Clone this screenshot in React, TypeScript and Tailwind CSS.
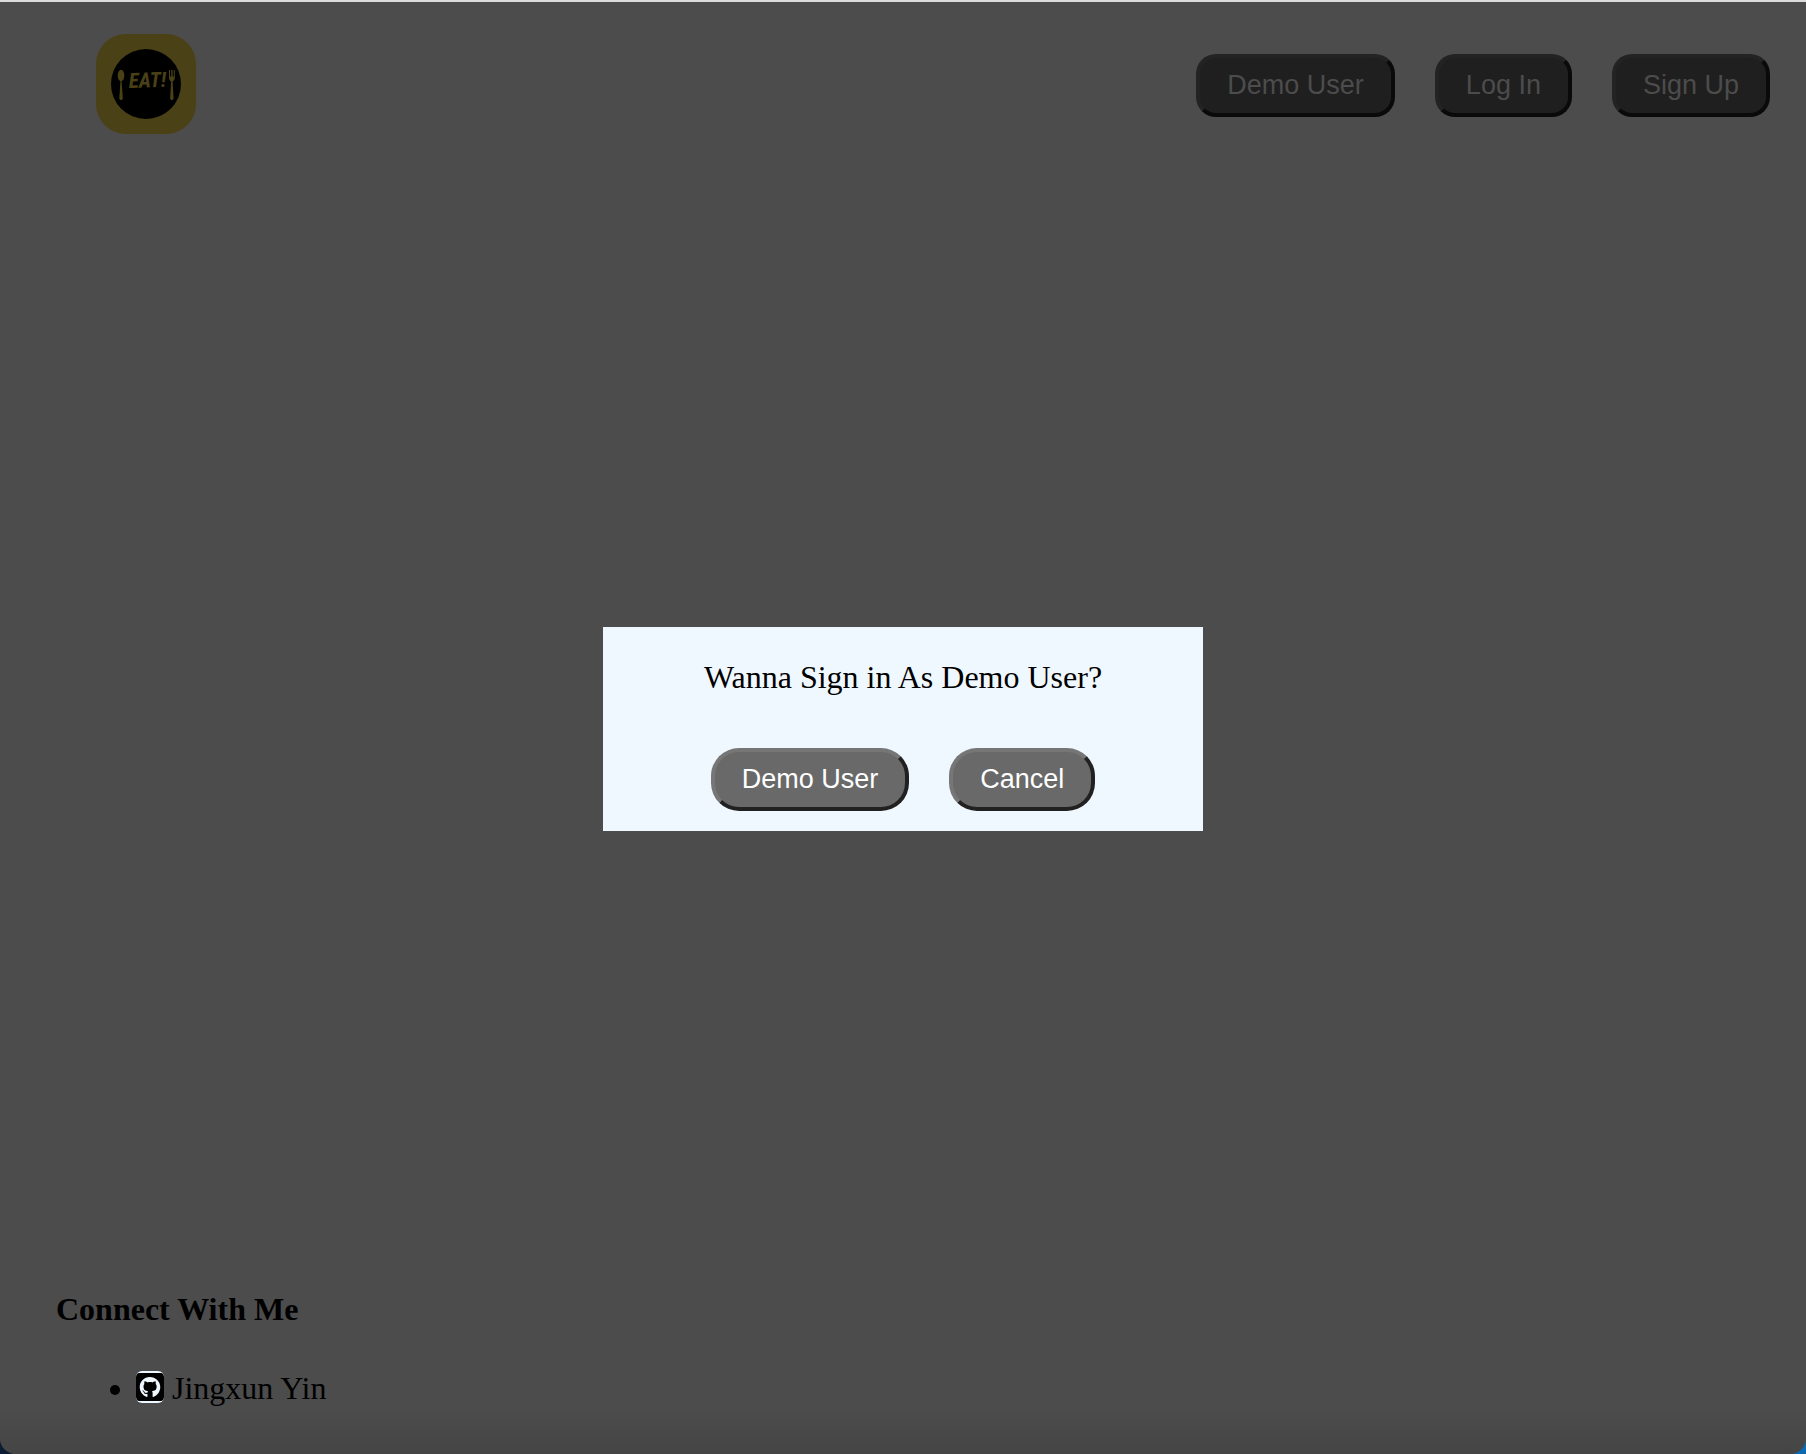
import type { ReactNode } from "react";
import { FaGithubSquare } from "react-icons/fa";

function Logo() {
  return (
    <svg viewBox="0 0 100 100" className="size-[100px] rounded-[30px] bg-[#4a4117]" role="img" aria-label="EAT!">
      <circle cx="50" cy="50" r="35" fill="#000" />
      <g fill="#4a4117">
        <ellipse cx="25" cy="41.500" rx="3.300" ry="5.700" />
        <path d="M24.500 46h1l1.300 18.500q-1.700 3.500-3.500 0z" />
        <path d="M73 36h1v6.500h1.200v-6.500h1.400v6.500h1.200v-6.500h1v8q0 2.500-2.200 3.500l1 17q-1.700 3.500-3.500 0l1-17q-2.100-1-2.100-3.500z" />
        <text
          x="33"
          y="54"
          transform="rotate(-2 33 54)"
          fontSize="21"
          fontWeight="700"
          fontStyle="italic"
          fontFamily="'Liberation Sans Narrow', 'Roboto Condensed', 'Open Sans Condensed', Roboto, sans-serif"
        >
          EAT!
        </text>
      </g>
    </svg>
  );
}

const button =
  "border-4 px-[27px] py-3 font-['Liberation_Sans',Arial,sans-serif] text-[27px] leading-[31px]";

function NavButton({ children }: { children: ReactNode }) {
  return (
    <button
      type="button"
      className={`${button} rounded-[20px] border-t-[#232323] border-r-[#0a0a0a] border-b-[#0a0a0a] border-l-[#232323] bg-[#1f1f1f] text-[#4c4c4c]`}
    >
      {children}
    </button>
  );
}

function ModalButton({ children }: { children: ReactNode }) {
  return (
    <button
      type="button"
      className={`${button} rounded-[28px] border-t-[#767676] border-r-[#212121] border-b-[#212121] border-l-[#767676] bg-[#696969] text-white`}
    >
      {children}
    </button>
  );
}

export default function App() {
  return (
    <div className="bg-linear-to-r from-[#0b1c33] from-50% to-[#0a6ab4] to-50% font-['Liberation_Serif','Times_New_Roman',serif] text-[32px] leading-9 text-black">
      <div className="flex min-h-screen flex-col rounded-b-2xl border-t-2 border-t-[#dcdcdc] bg-[#4c4c4c] bg-linear-to-b from-[#4c4c4c] from-97% to-[#454545]">
        <header className="flex items-center justify-between pt-8 pr-9 pl-24">
          <a href="#home">
            <Logo />
          </a>
          <nav className="flex gap-10 pt-0.5">
            <NavButton>Demo User</NavButton>
            <NavButton>Log In</NavButton>
            <NavButton>Sign Up</NavButton>
          </nav>
        </header>
        <footer className="mt-auto px-14 pb-12">
          <h2 className="font-bold">Connect With Me</h2>
          <ul className="mt-[43px] list-disc pl-20">
            <li>
              <a href="#github">
                <FaGithubSquare className="inline h-8 w-7 rounded-[6px] bg-[#f0f8ff] align-[-4px]" />{" "}
                Jingxun Yin
              </a>
            </li>
          </ul>
        </footer>
      </div>
      <div className="fixed inset-x-0 top-1 bottom-0 flex items-center justify-center">
        <div
          role="dialog"
          aria-labelledby="prompt"
          className="flex w-[600px] flex-col items-center bg-[#f0f8ff] pt-8 pb-5"
        >
          <p id="prompt">Wanna Sign in As Demo User?</p>
          <div className="mt-[53px] flex gap-10">
            <ModalButton>Demo User</ModalButton>
            <ModalButton>Cancel</ModalButton>
          </div>
        </div>
      </div>
    </div>
  );
}
